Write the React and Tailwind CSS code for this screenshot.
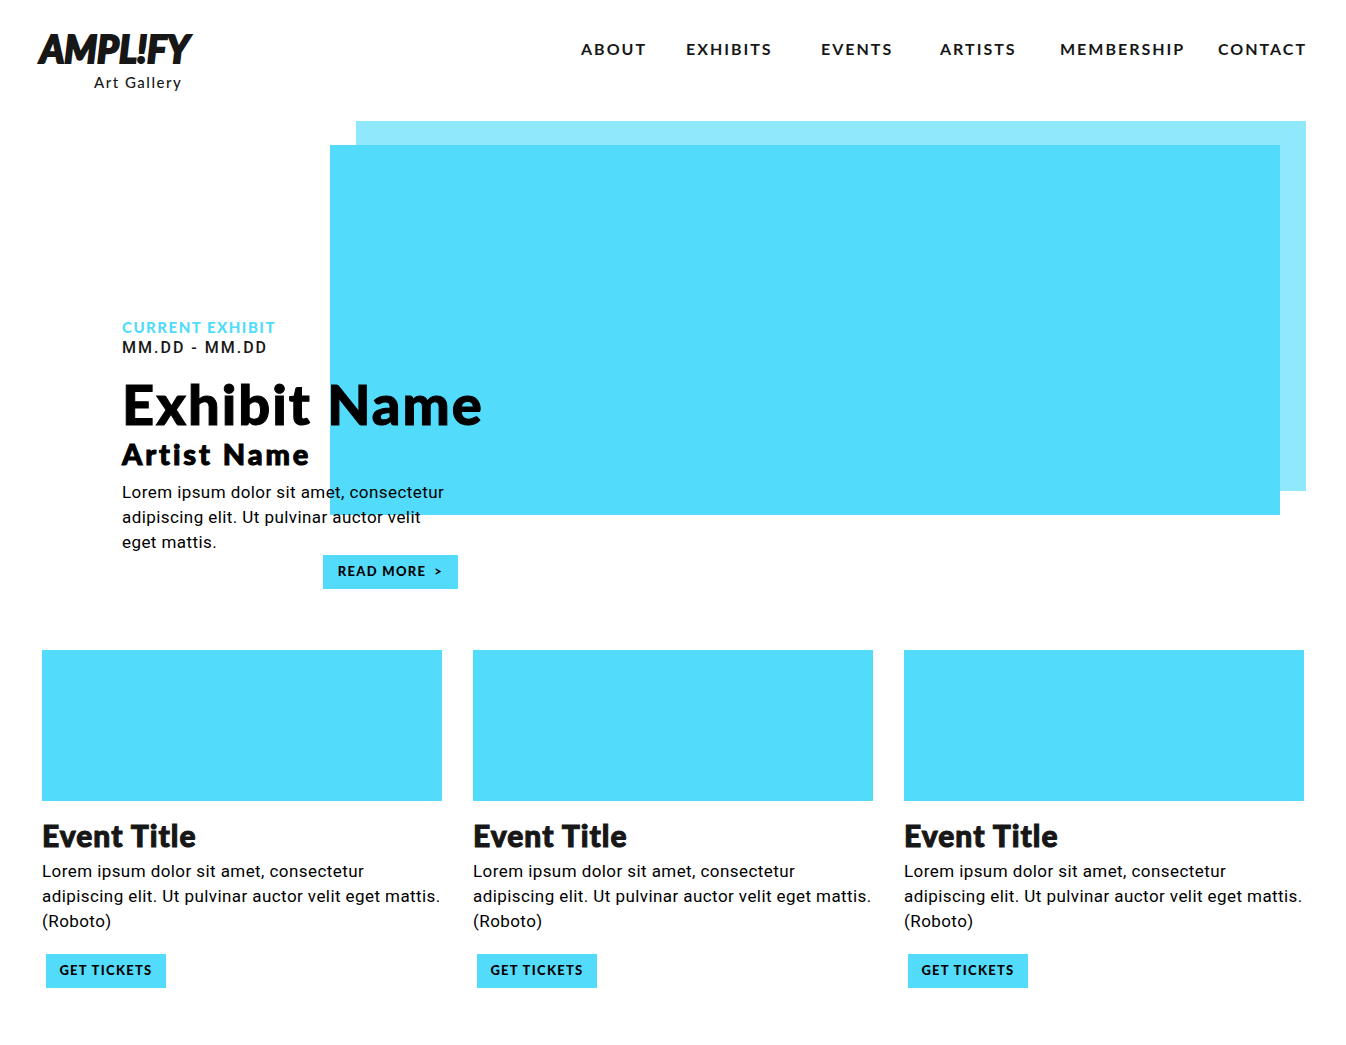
const links = ["About", "Exhibits", "Events", "Artists", "Membership", "Contact"];
const events = [1, 2, 3];

function EventCard() {
  return (
    <article>
      <div className="h-[151px] bg-[#53dbfc]" />
      <h2 className="mt-4 font-['Lato',sans-serif] text-[30px] leading-9 font-black tracking-[1px] text-[#171717] [-webkit-text-stroke:1px]">
        Event Title
      </h2>
      <p className="mt-1.5 text-[17px] leading-[25px] tracking-wide">
        Lorem ipsum dolor sit amet, consectetur adipiscing elit. Ut pulvinar auctor velit eget mattis. (Roboto)
      </p>
      <button
        type="button"
        className="mt-5 ml-1 h-[34px] w-[120px] bg-[#53dbfc] font-['Lato',sans-serif] text-[13px] font-black tracking-widest whitespace-nowrap"
      >
        GET TICKETS
      </button>
    </article>
  );
}

export default function App() {
  return (
    <div className="bg-white pb-14 font-['Roboto',sans-serif] text-black">
      <header className="flex h-[121px] items-start justify-between px-10 pt-[27px]">
        <a href="#home" className="block text-[#171717]">
          <span className="block font-['Lato',sans-serif] text-[37px] leading-[44px] font-black italic [-webkit-text-stroke:2px]">
            AMPL!FY
          </span>
          <span className="block pl-[54px] font-['Lato',sans-serif] text-[15px] leading-[22px] font-medium tracking-widest">
            Art Gallery
          </span>
        </a>
        <nav aria-label="Main" className="grid grid-cols-[105px_135px_119px_120px_158px_88px] pt-2.5">
          {links.map((link) => (
            <a
              key={link}
              href={"#" + link.toLowerCase()}
              className="font-['Lato',sans-serif] text-base font-bold tracking-[2px] text-[#171717] uppercase"
            >
              {link}
            </a>
          ))}
        </nav>
      </header>

      <main>
        <section className="grid grid-cols-1 items-start">
          <div className="col-start-1 row-start-1 mr-10 ml-[356px] h-[370px] bg-[#8fe8fb]" />
          <div className="col-start-1 row-start-1 mt-6 mr-[66px] ml-[330px] h-[370px] bg-[#53dbfc]" />
          <div className="z-10 col-start-1 row-start-1 mt-[195px] ml-[122px] w-[336px]">
            <p className="font-['Lato',sans-serif] text-[15px] leading-[22px] font-black tracking-widest text-[#53dbfc]">
              CURRENT EXHIBIT
            </p>
            <p className="text-base leading-5 font-medium tracking-[2px] text-[#171717]">MM.DD - MM.DD</p>
            <h1 className="mt-4 font-['Lato',sans-serif] text-[56px] leading-[60px] font-black tracking-[2px] whitespace-nowrap [-webkit-text-stroke:1px]">
              Exhibit Name
            </h1>
            <h2 className="mt-0.5 font-['Lato',sans-serif] text-[29px] leading-9 font-black tracking-widest [-webkit-text-stroke:1px]">
              Artist Name
            </h2>
            <p className="mt-2 text-[17px] leading-[25px] tracking-wide">
              Lorem ipsum dolor sit amet, consectetur adipiscing elit. Ut pulvinar auctor velit eget mattis.
            </p>
            <button
              type="button"
              className="ml-auto flex h-[34px] w-[135px] items-center justify-center gap-2 bg-[#53dbfc] font-['Lato',sans-serif] text-[13px] font-black tracking-widest"
            >
              <span>READ MORE</span>
              <span>&gt;</span>
            </button>
          </div>
        </section>

        <section className="mt-[61px] grid grid-cols-3 gap-[31px] px-[42px]">
          {events.map((id) => (
            <EventCard key={id} />
          ))}
        </section>
      </main>
    </div>
  );
}
